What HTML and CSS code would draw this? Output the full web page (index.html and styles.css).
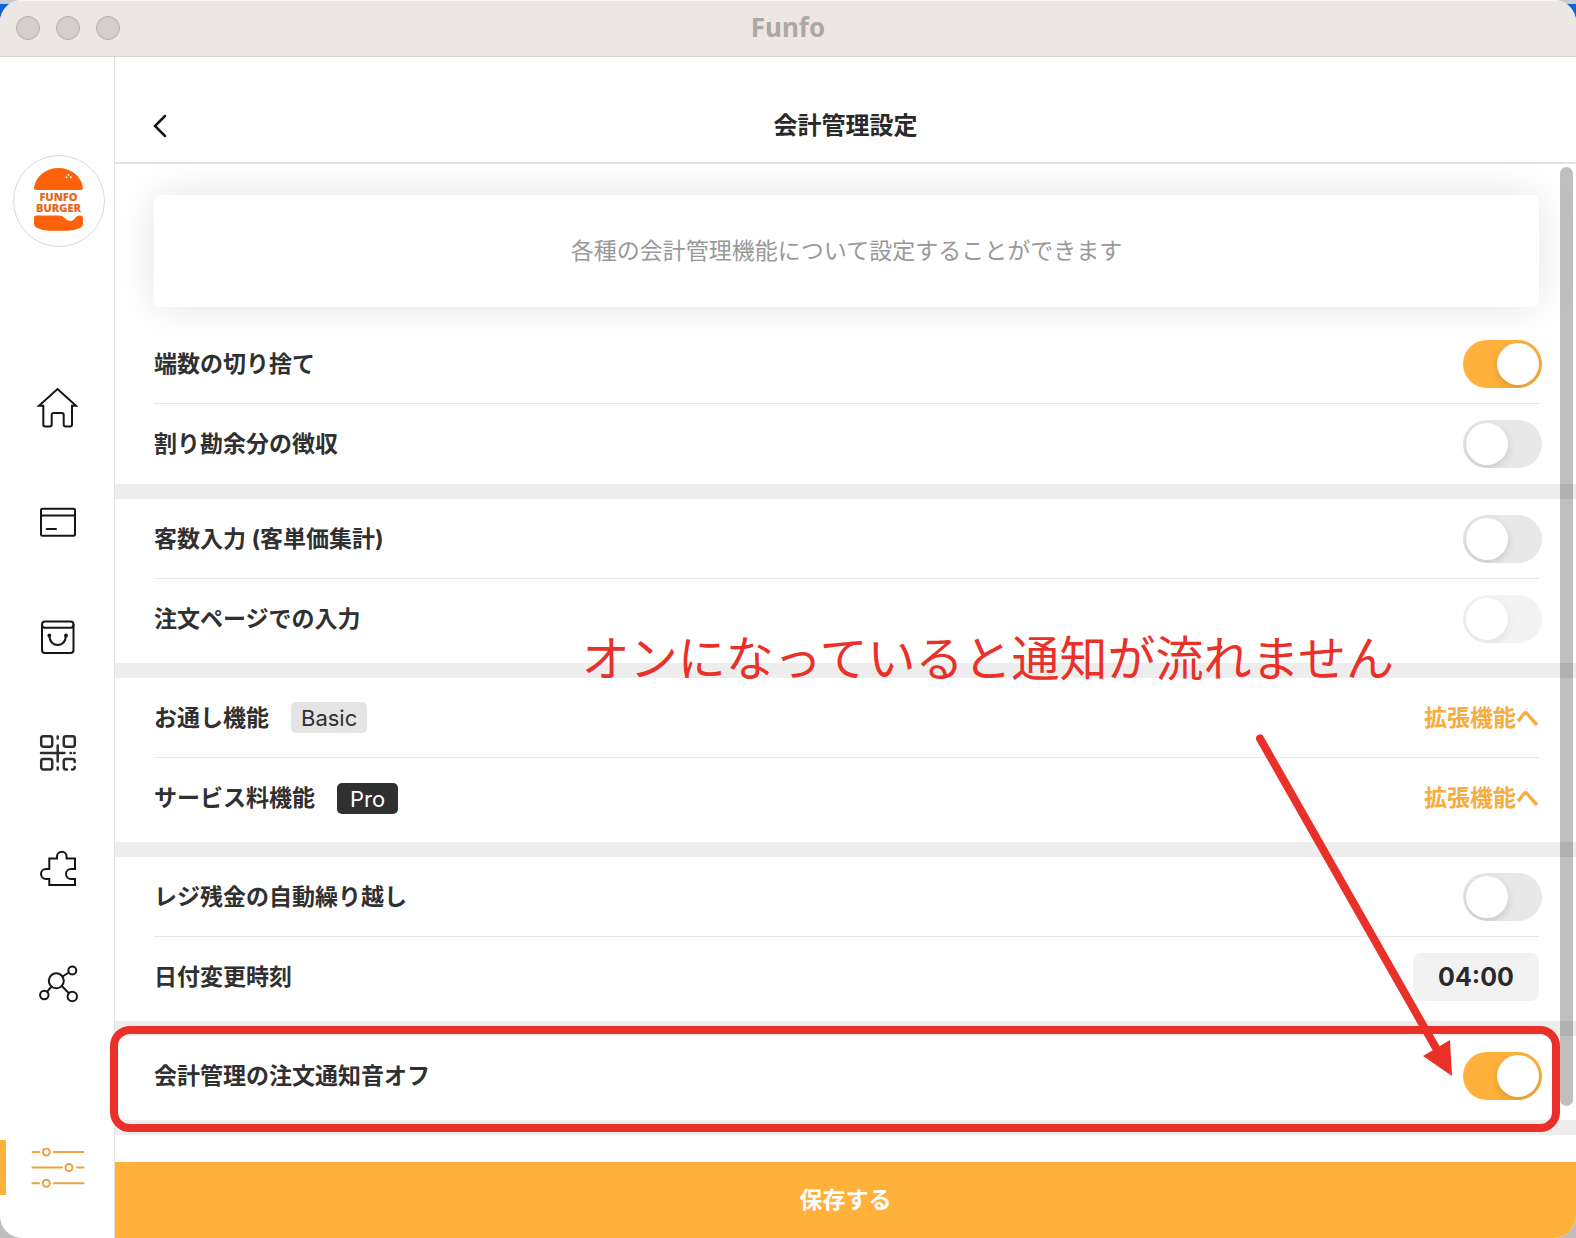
FILE: index.html
```html
<!DOCTYPE html>
<html lang="ja">
<head>
    <meta charset="UTF-8">
    <meta name="viewport" content="width=device-width, initial-scale=1.0">
    <title>Funfo</title>
    <link rel="stylesheet" href="styles.css">
</head>
<body>
    <div class="window">
        <div class="titlebar">
            <div class="window-buttons">
                <button class="window-button" aria-label="閉じる"></button>
                <button class="window-button" aria-label="しまう"></button>
                <button class="window-button" aria-label="拡大"></button>
            </div>
            <div class="window-title">Funfo</div>
        </div>

        <div class="app">
            <nav class="sidebar">
                <a href="#" class="shop-logo" aria-label="店舗">
                    <svg width="90" height="90" viewBox="1 1 90 90">
                        <path fill="#fb620a" d="M21 32.500C23 21 33 13 45.500 13S68 21 70 32.500Q70 35 68 35H23Q21 35 21 32.500Z"/>
                        <path fill="#fb620a" d="M21 62.500Q21 60.500 23 60.500H46C51 60.500 53 66 57.500 66C61.500 66 62 60.500 67 60.500Q70 60.500 70 63V69Q70 71.500 67 73Q61 75.700 55 75.700H36Q30 75.700 24 73Q21 71.500 21 69Z"/>
                        <g fill="#fff"><circle cx="55.500" cy="20" r="1"/><circle cx="53.500" cy="22.300" r="1"/><circle cx="57.800" cy="22.300" r="1"/></g>
                        <text class="logo-text"><tspan x="45.500" y="46">FUNFO</tspan><tspan x="45.500" y="57">BURGER</tspan></text>
                    </svg>
                </a>

                <a href="#" class="nav-item" aria-label="ホーム">
                    <svg class="nav-icon" viewBox="0 0 40 40"><path d="M20.500 1L39 17.800H35V36.500a2 2 0 0 1-2 2H28.700a2 2 0 0 1-2-2V27a2 2 0 0 0-2-2H16.700a2 2 0 0 0-2 2V36.500a2 2 0 0 1-2 2H8.300a2 2 0 0 1-2-2V17.800H2Z"/></svg>
                </a>
                <a href="#" class="nav-item" aria-label="会計">
                    <svg class="nav-icon" viewBox="0 0 40 40"><rect x="4" y="5.700" width="34" height="27" rx="1.500"/><path d="M4 12.600H38M9.700 26H19"/></svg>
                </a>
                <a href="#" class="nav-item" aria-label="注文">
                    <svg class="nav-icon" viewBox="0 0 40 40"><rect x="5" y="3.500" width="31.500" height="31.500" rx="3"/><path d="M5 7Q5 9.800 8 9.800H33.500Q36.500 9.800 36.500 7M12.500 18C12.500 30 28.800 30 28.800 18"/><circle class="dot" cx="12.300" cy="17.500" r="1.900"/><circle class="dot" cx="29" cy="17.500" r="1.900"/></svg>
                </a>
                <a href="#" class="nav-item" aria-label="QRコード">
                    <svg class="nav-icon qr" viewBox="0 0 40 40"><rect x="4.200" y="3.200" width="11" height="10.500" rx="2.200"/><rect x="26.800" y="3.200" width="11" height="10.500" rx="2.200"/><rect x="4.200" y="26" width="11" height="10.500" rx="2.200"/><path d="M4 20H27.500M20.700 12.500V28.500M20.700 3.500V5.500M20.700 34.500V36.500M33.500 20H34M37.200 20H37.600M30 36.500H29a2.200 2.200 0 0 1-2.200-2.200V28.200a2.200 2.200 0 0 1 2.200-2.200H35.500a2.200 2.200 0 0 1 2.200 2.200V29M35 36.500H35.500a2.200 2.200 0 0 0 2.200-2.200V34"/></svg>
                </a>
                <a href="#" class="nav-item" aria-label="拡張機能">
                    <svg class="nav-icon" viewBox="0 0 40 40"><path d="M12.300 10.500H20V8.500a4.800 4.800 0 0 1 9.600 0V10.500H38V21H34a5 5 0 0 0 0 10H38V37H12.300V31H9a5 5 0 0 1 0-10H12.300Z"/></svg>
                </a>
                <a href="#" class="nav-item" aria-label="連携">
                    <svg class="nav-icon" viewBox="0 0 40 40"><circle cx="19.300" cy="17.800" r="7.500"/><circle cx="35.300" cy="7.500" r="4"/><circle cx="7.300" cy="32" r="4.200"/><circle cx="35.300" cy="33.500" r="4.700"/><path d="M25.500 13.500L32 9.500M14.500 23.500L10 28.800M24.700 23L32 30.200"/></svg>
                </a>

                <a href="#" class="nav-item active" aria-label="設定">
                    <svg class="settings-icon" viewBox="0 0 54 40"><path d="M1.500 4H8M23 4H52.500M1.500 19.500H31M46 19.500H52.500M1.500 35.300H8M23 35.300H52.500"/><circle cx="15.300" cy="4" r="3.500"/><circle cx="38" cy="19.500" r="3.500"/><circle cx="15.300" cy="35.300" r="3.500"/></svg>
                </a>
            </nav>

            <main class="main">
                <header class="page-header">
                    <button class="back-button" aria-label="戻る">
                        <svg width="14" height="24" viewBox="0 0 14 24"><path d="M12 2L2 12L12 22"/></svg>
                    </button>
                    <h1 class="page-title">会計管理設定</h1>
                </header>

                <div class="settings">
                    <p class="description">各種の会計管理機能について設定することができます</p>

                    <section class="group first">
                        <div class="row">
                            <label for="round-down">端数の切り捨て</label>
                            <input type="checkbox" class="toggle" id="round-down" checked>
                        </div>
                        <div class="row">
                            <label for="split-extra">割り勘余分の徴収</label>
                            <input type="checkbox" class="toggle" id="split-extra">
                        </div>
                    </section>

                    <section class="group">
                        <div class="row">
                            <label for="guest-count">客数入力 (客単価集計)</label>
                            <input type="checkbox" class="toggle" id="guest-count">
                        </div>
                        <div class="row">
                            <label for="order-page">注文ページでの入力</label>
                            <input type="checkbox" class="toggle" id="order-page" disabled>
                        </div>
                    </section>

                    <section class="group">
                        <div class="row">
                            <span>お通し機能</span>
                            <span class="badge basic">Basic</span>
                            <a href="#" class="row-link">拡張機能へ</a>
                        </div>
                        <div class="row">
                            <span>サービス料機能</span>
                            <span class="badge pro">Pro</span>
                            <a href="#" class="row-link">拡張機能へ</a>
                        </div>
                        <p class="note">オンになっていると通知が流れません</p>
                    </section>

                    <section class="group">
                        <div class="row">
                            <label for="carry-over">レジ残金の自動繰り越し</label>
                            <input type="checkbox" class="toggle" id="carry-over">
                        </div>
                        <div class="row">
                            <label for="date-change">日付変更時刻</label>
                            <input type="text" class="time-input" id="date-change" value="04:00">
                        </div>
                    </section>

                    <section class="group">
                        <div class="row">
                            <label for="sound-off">会計管理の注文通知音オフ</label>
                            <input type="checkbox" class="toggle" id="sound-off" checked>
                        </div>
                        <div class="highlight"></div>
                        <svg class="arrow" width="210" height="350" viewBox="0 0 210 350">
                            <path d="M10 8.500L186 318"/>
                            <polygon points="173,326 200,310 202,346"/>
                        </svg>
                    </section>

                    <div class="scrollbar"></div>
                </div>

                <button class="save-button">保存する</button>
            </main>
        </div>
    </div>
</body>
</html>
```
FILE: styles.css
```css
:root {
    --primary-color: #ffb13b;
    --mark-color: #e93029;
    --text-color: #303030;
    --line-color: #ededed;
}

* {
    box-sizing: border-box;
}

body {
    margin: 0;
    background: linear-gradient(#c9cdd4 4px, #1263d2 4px, #1263d2 50%, #bdbdbd 50%);
    font-family: Inter, 'Noto Sans CJK JP', sans-serif;
    font-size: 23px;
    line-height: 32px;
    color: var(--text-color);
}

p, h1 {
    margin: 0;
}

button {
    padding: 0;
    border: none;
    background: none;
    font: inherit;
    cursor: pointer;
}

a {
    text-decoration: none;
}

.window {
    display: flex;
    flex-direction: column;
    min-height: 100vh;
    background: white;
    border-radius: 22px;
    overflow: hidden;
}

/* title bar */
.titlebar {
    display: grid;
    grid-template-columns: 1fr auto 1fr;
    align-items: center;
    height: 57px;
    padding: 0 16px 2px;
    background: #ece7e4;
    border-top: 1px solid #f7f4f2;
    border-bottom: 1px solid #d6d3d1;
}

.window-buttons {
    display: flex;
    gap: 16px;
}

.window-button {
    width: 24px;
    height: 24px;
    border: 1px solid #b3abaa;
    border-radius: 50%;
    background: #d5cdcc;
}

.window-title {
    padding-bottom: 2px;
    font-family: 'Noto Sans', sans-serif;
    font-size: 26px;
    font-weight: bold;
    color: #ada7a4;
}

.app {
    flex: 1;
    display: flex;
}

/* sidebar */
.sidebar {
    display: flex;
    flex-direction: column;
    align-items: center;
    flex-shrink: 0;
    width: 115px;
    padding: 98px 0 43px;
    border-right: 1px solid #e2e2e4;
}

.shop-logo {
    width: 92px;
    height: 92px;
    margin-bottom: 103px;
    margin-left: 4px;
    border: 1px solid #d6d8dc;
    border-radius: 50%;
}

.logo-text {
    font-family: 'Open Sans', sans-serif;
    font-size: 11px;
    font-weight: 800;
    text-anchor: middle;
    fill: #e4681c;
}

.nav-item {
    display: flex;
    align-items: center;
    justify-content: center;
    width: 100%;
    height: 115px;
}

.nav-icon {
    width: 40px;
    height: 40px;
    fill: none;
    stroke: #161616;
    stroke-width: 2;
    stroke-linecap: round;
    overflow: visible;
}

.nav-icon .dot {
    fill: #161616;
    stroke: none;
}

.nav-icon.qr {
    stroke: #2c2c2c;
    stroke-width: 2.5;
}

.nav-item.active {
    height: 55px;
    margin-top: auto;
    border-left: 6px solid var(--primary-color);
    padding-right: 4px;
}

.settings-icon {
    width: 54px;
    height: 40px;
    fill: none;
    stroke: #eda23c;
    stroke-width: 2;
    stroke-linecap: round;
}

/* page */
.main {
    flex: 1;
    display: flex;
    flex-direction: column;
    min-width: 0;
}

.page-header {
    display: grid;
    grid-template-columns: 1fr auto 1fr;
    align-items: center;
    height: 107px;
    padding: 32px 38px 0;
    border-bottom: 2px solid #e2e2e2;
}

.back-button {
    display: flex;
    width: 24px;
    height: 24px;
}

.back-button path {
    fill: none;
    stroke: #14141c;
    stroke-width: 2.5;
    stroke-linecap: round;
}

.page-title {
    font-size: 24px;
    font-weight: bold;
    color: #2a2a2a;
}

.settings {
    flex: 1;
    position: relative;
    padding-top: 31px;
    padding-bottom: 27px;
}

.description {
    margin: 0 37px 17px 39px;
    padding: 40px;
    border-radius: 6px;
    text-align: center;
    color: #999;
    box-shadow: 0 0 40px rgba(0, 0, 0, 0.11);
    clip-path: inset(-31px -37px -40px -39px);
}

.group {
    position: relative;
    padding: 0 37px 4px 39px;
    border-bottom: 15px solid var(--line-color);
    box-sizing: content-box;
}

.group.first {
    padding-bottom: 0;
}

.row {
    display: flex;
    align-items: center;
    gap: 22px;
    height: 80px;
    font-weight: bold;
}

.row:has(+ .row) {
    border-bottom: 1px solid #e6e6e6;
}

.toggle {
    appearance: none;
    display: flex;
    width: 79px;
    height: 48px;
    margin: 0 -3px 0 auto;
    padding: 3px;
    border-radius: 24px;
    background: #e8e8e8;
    overflow: hidden;
    cursor: pointer;
}

.toggle::before {
    content: '';
    width: 42px;
    height: 42px;
    border-radius: 50%;
    background: white;
    box-shadow: 0 3px 8px rgba(0, 0, 0, 0.15);
}

.toggle:checked {
    justify-content: flex-end;
    background: var(--primary-color);
}

.toggle:disabled {
    opacity: 0.5;
}

.badge {
    height: 31px;
    padding: 0 10px;
    border-radius: 5px;
    font-size: 22px;
    font-weight: 400;
}

.badge.basic {
    background: #e4e4e4;
}

.badge.pro {
    padding: 0 13px;
    background: #303030;
    color: white;
}

.row-link {
    margin-left: auto;
    color: #f5ad40;
}

.time-input {
    width: 126px;
    height: 48px;
    margin-left: auto;
    border: none;
    border-radius: 8px;
    background: #f2f2f2;
    font-family: inherit;
    font-size: 25px;
    font-weight: bold;
    text-align: center;
    color: #2a2a2a;
}

/* marks drawn over the page */
.note {
    position: absolute;
    top: -51px;
    right: 182px;
    font-size: 48px;
    line-height: 64px;
    white-space: nowrap;
    color: var(--mark-color);
}

.highlight {
    position: absolute;
    top: -10px;
    right: 16px;
    bottom: -12px;
    left: -5px;
    border: 8px solid var(--mark-color);
    border-radius: 20px;
    pointer-events: none;
}

.arrow {
    position: absolute;
    right: 116px;
    bottom: 40px;
    pointer-events: none;
}

.arrow path {
    stroke: var(--mark-color);
    stroke-width: 8;
    stroke-linecap: round;
}

.arrow polygon {
    fill: var(--mark-color);
}

.scrollbar {
    position: absolute;
    top: 3px;
    right: 3px;
    bottom: 56px;
    width: 13px;
    border-radius: 7px;
    background: rgba(0, 0, 0, 0.25);
}

.save-button {
    height: 76px;
    background: var(--primary-color);
    font-weight: bold;
    color: white;
}
```
